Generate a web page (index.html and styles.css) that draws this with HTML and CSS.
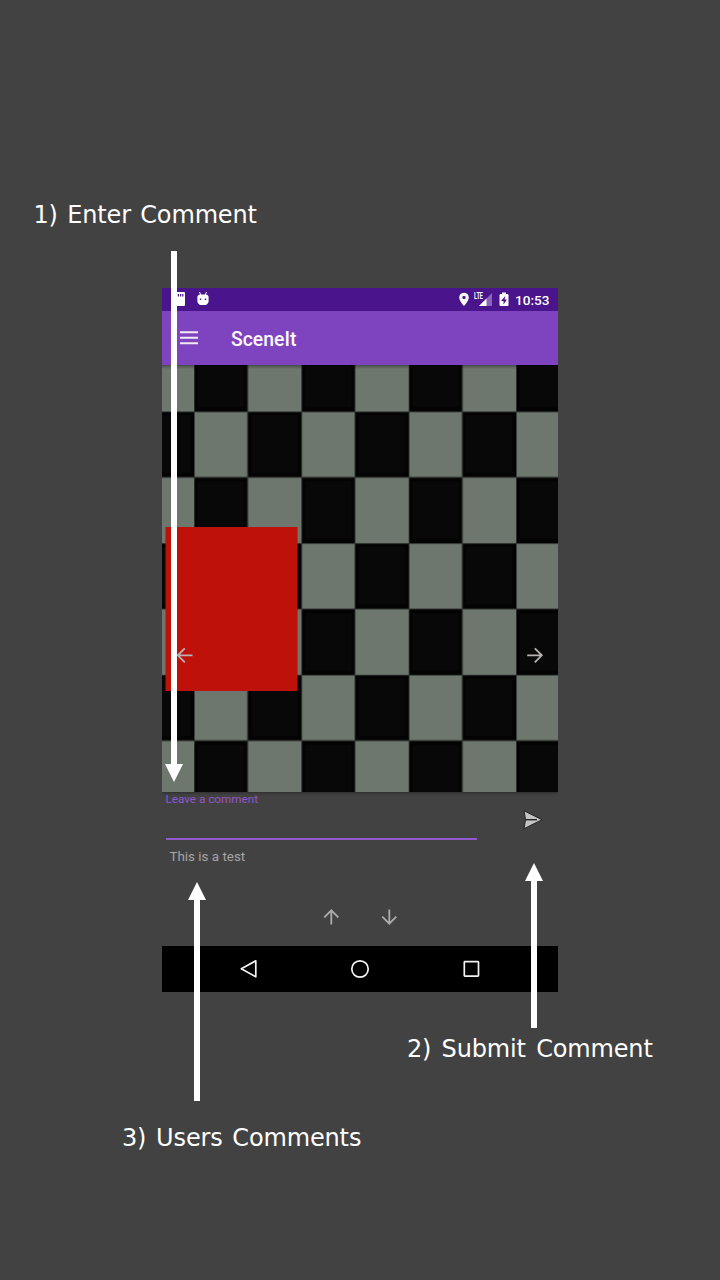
FILE: index.html
```html
<!DOCTYPE html>
<html lang="en">
<head>
<meta charset="utf-8">
<title>SceneIt</title>
<link rel="stylesheet" href="styles.css">
</head>
<body>
<main class="guide">
  <section class="phone">
    <div class="status">
      <div class="status-left">
        <svg width="12" height="14" viewBox="0 0 12 14"><path fill="#fff" fill-rule="evenodd" d="M4 0h7q1 0 1 1v12q0 1-1 1H1q-1 0-1-1V4zM4.800 2v2.500H6V2zM7 2v2.500h1.200V2zM9.200 2v2.500h1.200V2z"/></svg>
        <svg width="12" height="14" viewBox="0 0 12 14"><path fill="none" stroke="#fff" d="M2.500 0l1.300 3M9.500 0L8.200 3"/><path fill="#fff" fill-rule="evenodd" d="M2.500 2.500h7q1.500.5 2.100 2v5.500q-.8 2-2.600 3H3q-1.800-1-2.600-3V4.500q.6-1.500 2.100-2zM2.800 6.500v1.500h1.400V6.500zm5 0v1.500h1.400V6.500z"/></svg>
      </div>
      <div class="status-right">
        <svg class="pin" width="10" height="14" viewBox="0 0 10 14"><path fill="#fff" fill-rule="evenodd" d="M5 .7a4.800 4.800 0 0 1 4.800 4.800C9.800 9 5 14 5 14S.2 9 .2 5.500A4.800 4.800 0 0 1 5 .7zm0 3.100a1.700 1.700 0 1 0 0 3.400 1.700 1.700 0 0 0 0-3.400z"/></svg>
        <span class="signal"><svg width="17" height="15" viewBox="0 0 17 15"><path fill="#8a63bb" d="M17 1v13H4z"/><path fill="#fff" d="M11.500 6.500V14H4z"/></svg><span class="lte">LTE</span></span>
        <svg class="battery" width="10" height="14" viewBox="0 0 10 14"><path fill="#fff" fill-rule="evenodd" d="M3 .5h4v1.400h1.500q1 0 1 1V13q0 1-1 1h-7q-1 0-1-1V2.900q0-1 1-1H3zM6.300 4L2 9h2.500v3.500L8 7.500H5.600z"/></svg>
        <span class="clock">10:53</span>
      </div>
    </div>
    <header class="appbar">
      <svg class="menu" width="18" height="14" viewBox="0 0 18 14"><path stroke="#f2eaf8" stroke-width="1.900" d="M0 1.300h18M0 6.700h18M0 12.200h18"/></svg>
      <h1 class="title">SceneIt</h1>
    </header>
    <div class="scene">
      <svg width="396" height="427" viewBox="0 0 396 427">
        <defs>
          <pattern id="checks" x="32" y="46.500" width="107.340" height="131.660" patternUnits="userSpaceOnUse">
            <rect width="107.340" height="131.660" fill="#6d776e"/>
            <path fill="#020302" d="M53.670 0h53.670v65.830H53.670zM0 65.830h53.670v65.830H0z"/>
            <path fill="#080808" d="M57.500 4h46v57h-46zM4 70h46v57H4z"/>
            <path stroke="#303330" d="M0 .3h107.340M0 65.830h107.340M.3 0v131.660M53.670 0v131.660"/>
          </pattern>
          <linearGradient id="shade" x2="0" y2="1"><stop stop-opacity=".35"/><stop offset="1" stop-opacity="0"/></linearGradient>
        </defs>
        <rect width="396" height="427" fill="url(#checks)"/>
        <rect width="396" height="4" fill="url(#shade)"/>
        <rect x="3.500" y="162" width="132" height="164" fill="#bd1109"/>
        <g fill="none" stroke="#b9b4b4" stroke-width="1.800">
          <path d="M30.500 290.300H16M22.800 283.300l-7 7 7 7"/>
          <path d="M365.200 290.300H380M372.800 283.300l7 7-7 7"/>
        </g>
      </svg>
    </div>
    <div class="form">
      <div class="field">
        <label class="label">Leave a comment</label>
      </div>
      <svg class="send" width="20" height="20" viewBox="0 0 20 20"><path fill="#c4c4c4" stroke="#242424" d="M1 .8l18 8.900L1 18.700l1.300-7.400V8.200z"/><path stroke="#242424" stroke-width="1.400" d="M2 9.700h12"/></svg>
    </div>
    <div class="comment">This is a test</div>
    <div class="pager">
      <svg width="16" height="16" viewBox="0 0 16 16"><path d="M8.300 15.500V1.500M1.300 8.300l7-7 7 7"/></svg>
      <svg width="16" height="16" viewBox="0 0 16 16"><path d="M8.300 .5v14M1.300 7.700l7 7 7-7"/></svg>
    </div>
    <nav class="navbar">
      <svg width="20" height="20" viewBox="0 0 20 20"><path d="M16.800 1.800v16L2.300 9.800z"/></svg>
      <svg width="20" height="20" viewBox="0 0 20 20"><circle cx="10" cy="10" r="8.200"/></svg>
      <svg width="20" height="20" viewBox="0 0 20 20"><rect x="2.300" y="2.700" width="14.200" height="14.400" rx=".6"/></svg>
    </nav>
  </section>
  <svg class="arrows" width="720" height="1280" viewBox="0 0 720 1280" fill="#fff">
    <path d="M171 251h6v513h6L174 782l-9-18h6z"/>
    <path d="M531 1028h6V881h6l-9-18-9 18h6z"/>
    <path d="M194 1101h6V900h6l-9-18-9 18h6z"/>
  </svg>
  <p class="callout enter">1) Enter Comment</p>
  <p class="callout submit">2) Submit Comment</p>
  <p class="callout users">3) Users Comments</p>
</main>
</body>
</html>
```
FILE: styles.css
```css
body { margin: 0; background: #424242; }
svg { display: block; flex: none; }

.guide {
  position: relative;
  box-sizing: border-box;
  width: 720px;
  height: 1280px;
  padding: 288px 162px;
  overflow: hidden;
}

.phone {
  display: flex;
  flex-direction: column;
  height: 704px;
  font-family: Roboto, sans-serif;
}

.status {
  display: flex;
  justify-content: space-between;
  box-sizing: border-box;
  height: 23px;
  padding: 4px 7px 0 11px;
  background: #4a148c;
}
.status-left { display: flex; gap: 12px; }
.status-right { display: flex; }
.signal { position: relative; margin: 0 7px 0 6px; }
.lte {
  position: absolute;
  left: -1px;
  top: 0;
  font: 700 9px/8px "Roboto", sans-serif;
  color: #fff;
  transform: scaleX(.62);
  transform-origin: 0 0;
}
.clock {
  width: 36px;
  margin-left: 6px;
  font-size: 13.6px;
  font-weight: 500;
  line-height: 17px;
  color: #fff;
  white-space: nowrap;
}

.appbar {
  display: flex;
  align-items: center;
  gap: 33px;
  height: 54px;
  padding-left: 18px;
  background: #7e43be;
}
.title {
  margin: 3px 0 0;
  font-size: 19.4px;
  font-weight: 500;
  line-height: 24px;
  color: #fbf7fd;
}

.scene { height: 427px; box-shadow: 0 1px 3px rgba(0, 0, 0, .35); clip-path: inset(0 0 -5px 0); }

.form { display: flex; gap: 46px; padding-left: 3.500px; height: 48px; }
.field {
  box-sizing: border-box;
  width: 311px;
  height: 47.500px;
  border-bottom: 2px solid #9358cc;
}
.label { display: block; font-size: 11.7px; line-height: 14px; color: #9257cb; }
.send { margin-top: 18px; }

.comment { height: 60px; padding: 7px 0 0 7.500px; box-sizing: border-box; font-size: 13.4px; line-height: 19px; color: #a5a5a5; }

.pager {
  display: flex;
  justify-content: center;
  gap: 42px;
  height: 46px;
  padding-top: 9px;
  box-sizing: border-box;
  fill: none;
  stroke: #acacac;
  stroke-width: 1.8;
}

.navbar {
  display: flex;
  justify-content: center;
  align-items: center;
  gap: 91.500px;
  height: 46px;
  background: #000;
  fill: none;
  stroke: #f3f3f3;
  stroke-width: 1.7;
  stroke-linejoin: round;
}

.arrows { position: absolute; left: 0; top: 0; }
.callout {
  position: absolute;
  margin: 0;
  font: 24px/28px "DejaVu Sans", Verdana, sans-serif;
  letter-spacing: -.15px;
  color: #fff;
  white-space: nowrap;
}
.enter { left: 33.500px; top: 201px; word-spacing: 1.9px; }
.submit { left: 407px; top: 1035px; word-spacing: 2.8px; }
.users { left: 122px; top: 1124px; word-spacing: 2.3px; }
```
